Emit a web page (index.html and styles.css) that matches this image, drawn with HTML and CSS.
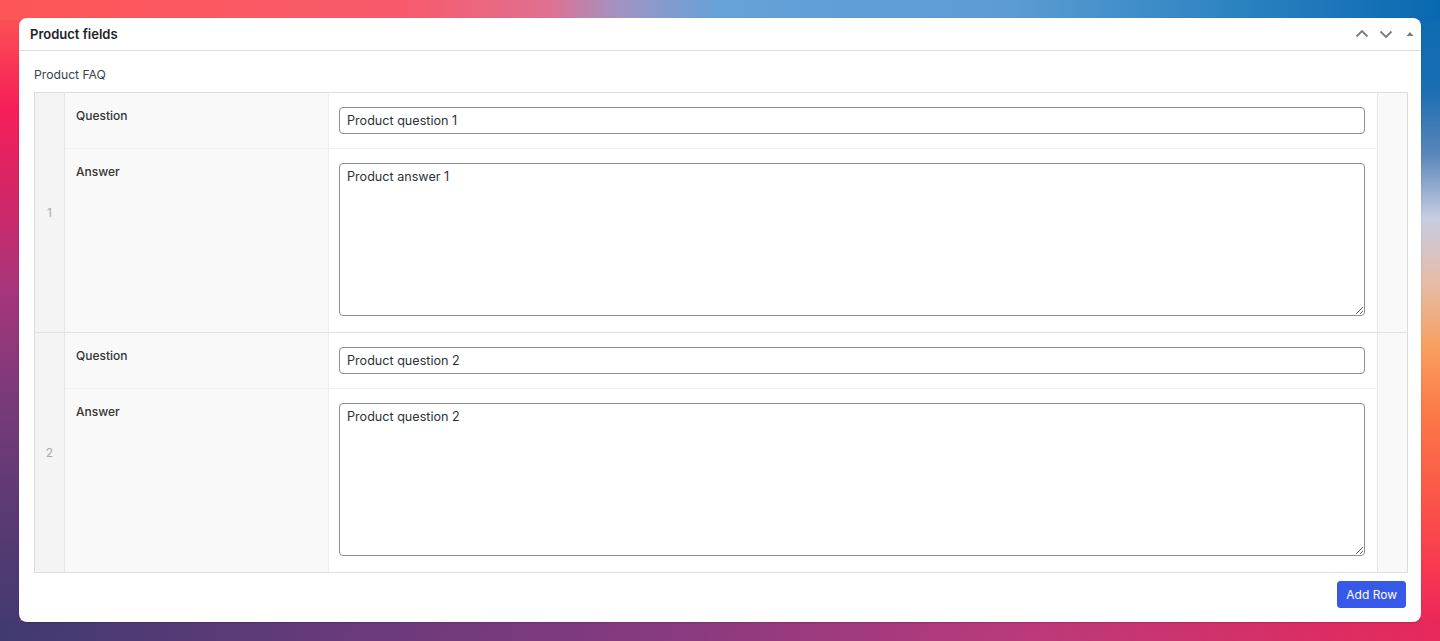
FILE: index.html
```html
<!DOCTYPE html>
<html>
<head>
<meta charset="utf-8">
<link rel="stylesheet" href="styles.css">
</head>
<body>
<div class="card">
  <div class="card-head">
    <h2 class="card-title">Product fields</h2>
    <div class="head-actions">
      <svg class="ico" width="16" height="16" viewBox="0 0 16 16"><path d="M2.5 10.5 L8 5 L13.5 10.5" fill="none" stroke="#787c82" stroke-width="1.8"/></svg>
      <svg class="ico" width="16" height="16" viewBox="0 0 16 16"><path d="M2.5 5.5 L8 11 L13.5 5.5" fill="none" stroke="#787c82" stroke-width="1.8"/></svg>
      <svg class="ico tri" width="10" height="16" viewBox="0 0 10 16"><path d="M1.5 10 L5 6 L8.5 10 Z" fill="#787c82"/></svg>
    </div>
  </div>
  <div class="card-body">
    <div class="field-label">Product FAQ</div>
    <table class="rep">
      <colgroup><col class="c-num"><col class="c-lab"><col class="c-inp"><col class="c-end"></colgroup>
      <tbody>
        <tr class="sub">
          <td class="num" rowspan="2">1</td>
          <td class="lab">Question</td>
          <td class="inp"><input class="txt" type="text" value="Product question 1"></td>
          <td class="end" rowspan="2"></td>
        </tr>
        <tr class="sub last">
          <td class="lab">Answer</td>
          <td class="inp"><textarea class="area">Product answer 1</textarea></td>
        </tr>
        <tr class="sub">
          <td class="num" rowspan="2">2</td>
          <td class="lab">Question</td>
          <td class="inp"><input class="txt" type="text" value="Product question 2"></td>
          <td class="end" rowspan="2"></td>
        </tr>
        <tr class="sub last">
          <td class="lab">Answer</td>
          <td class="inp"><textarea class="area">Product question 2</textarea></td>
        </tr>
      </tbody>
    </table>
    <div class="actions"><button class="btn">Add Row</button></div>
  </div>
</div>
</body>
</html>
```

FILE: styles.css
```css
* { box-sizing: border-box; }
html, body { margin: 0; height: 641px; overflow: hidden; }
body {
  padding: 18px 19px 19px 19px;
  font-family: Inter, "Noto Sans", "Liberation Sans", sans-serif;
  background-color: #b03a78;
  background-image:
    linear-gradient(to right, #fe5656 0%, #f85a6c 28%, #e07090 38%, #a094c4 43%, #64a2d8 50%, #5c9cd2 70%, #2e84c2 85%, #0a68b0 100%),
    linear-gradient(to right, #403a70 0%, #6a3a7c 25%, #8a3a80 48%, #b83a7c 70%, #e8285a 100%),
    linear-gradient(to bottom, #fe5a55 0%, #f61e58 17%, #d42666 30%, #a8357a 45%, #7a3a7a 62%, #5a3a74 80%, #403a70 100%),
    linear-gradient(to bottom, #0a6ab0 0%, #1a6eb2 14%, #5a86ba 24%, #c6cde2 34%, #e6bca8 44%, #f8a060 54%, #fc7a48 64%, #fb5a48 76%, #f83a50 88%, #e8205a 100%);
  background-size: 100% 20px, 100% 20px, 20px 100%, 20px 100%;
  background-position: 0 0, 0 100%, 0 0, 100% 0;
  background-repeat: no-repeat;
}
.card {
  height: 604px;
  background: #fff;
  border-radius: 8px;
  overflow: hidden;
  box-shadow: 0 1px 2px rgba(0,0,0,0.15);
}
.card-head {
  height: 33px;
  border-bottom: 1px solid #dcdcde;
  display: flex;
  align-items: center;
  justify-content: space-between;
  padding: 0 6px 0 11px;
}
.card-title {
  margin: 0;
  font-size: 13px;
  font-weight: 600;
  color: #1d2327;
}
.head-actions { display: flex; align-items: center; gap: 8px; }
.ico { display: block; }
.tri { margin-left: 3px; }
.card-body { padding: 15px 13px 0 15px; }
.field-label {
  font-size: 12.2px;
  color: #3c434a;
  line-height: 18px;
  margin-bottom: 8px;
}
.rep {
  width: 100%;
  border-collapse: collapse;
  table-layout: fixed;
  border: 1px solid #dcdcde;
}
.c-num { width: 30px; }
.c-lab { width: 264px; }
.c-end { width: 30px; }
.rep td { padding: 0; vertical-align: top; }
.num {
  background: #f4f4f4;
  border-right: 1px solid #e6e6e6;
  border-bottom: 1px solid #e1e1e1;
  color: #aaa;
  font-size: 12px;
  text-align: center;
  vertical-align: middle !important;
}
.end {
  background: #f9f9f9;
  border-left: 1px solid #e6e6e6;
  border-bottom: 1px solid #e1e1e1;
}
.lab {
  background: #f9f9f9;
  border-right: 1px solid #eeeeee;
  padding: 14px 11px 0 !important;
  font-size: 12px;
  font-weight: 500;
  color: #333;
  line-height: 18px;
}
.inp { padding: 14px 12px 14px 10px !important; }
.sub > td.lab, .sub > td.inp { border-bottom: 1px solid #f0f0f1; }
.sub.last > td.lab, .sub.last > td.inp { border-bottom: 1px solid #e1e1e1; }
.sub.last .inp { padding-bottom: 16px !important; }
.txt {
  display: block;
  width: 100%;
  height: 27px;
  border: 1px solid #8c8f94;
  border-radius: 4px;
  padding: 0 7px;
  font-family: inherit;
  font-size: 12.6px;
  color: #2c3338;
  background: #fff;
}
.area {
  display: block;
  width: 100%;
  height: 153px;
  border: 1px solid #8c8f94;
  border-radius: 4px;
  padding: 4px 7px;
  font-family: inherit;
  font-size: 12.6px;
  line-height: 18px;
  color: #2c3338;
  background: #fff;
}
.actions { display: flex; justify-content: flex-end; padding: 8px 2px 0 0; }
.btn {
  height: 27px;
  padding: 0 8px;
  background: #3858e9;
  color: #fff;
  border: 1px solid #3858e9;
  border-radius: 3px;
  font-family: inherit;
  font-size: 12px;
}
```
